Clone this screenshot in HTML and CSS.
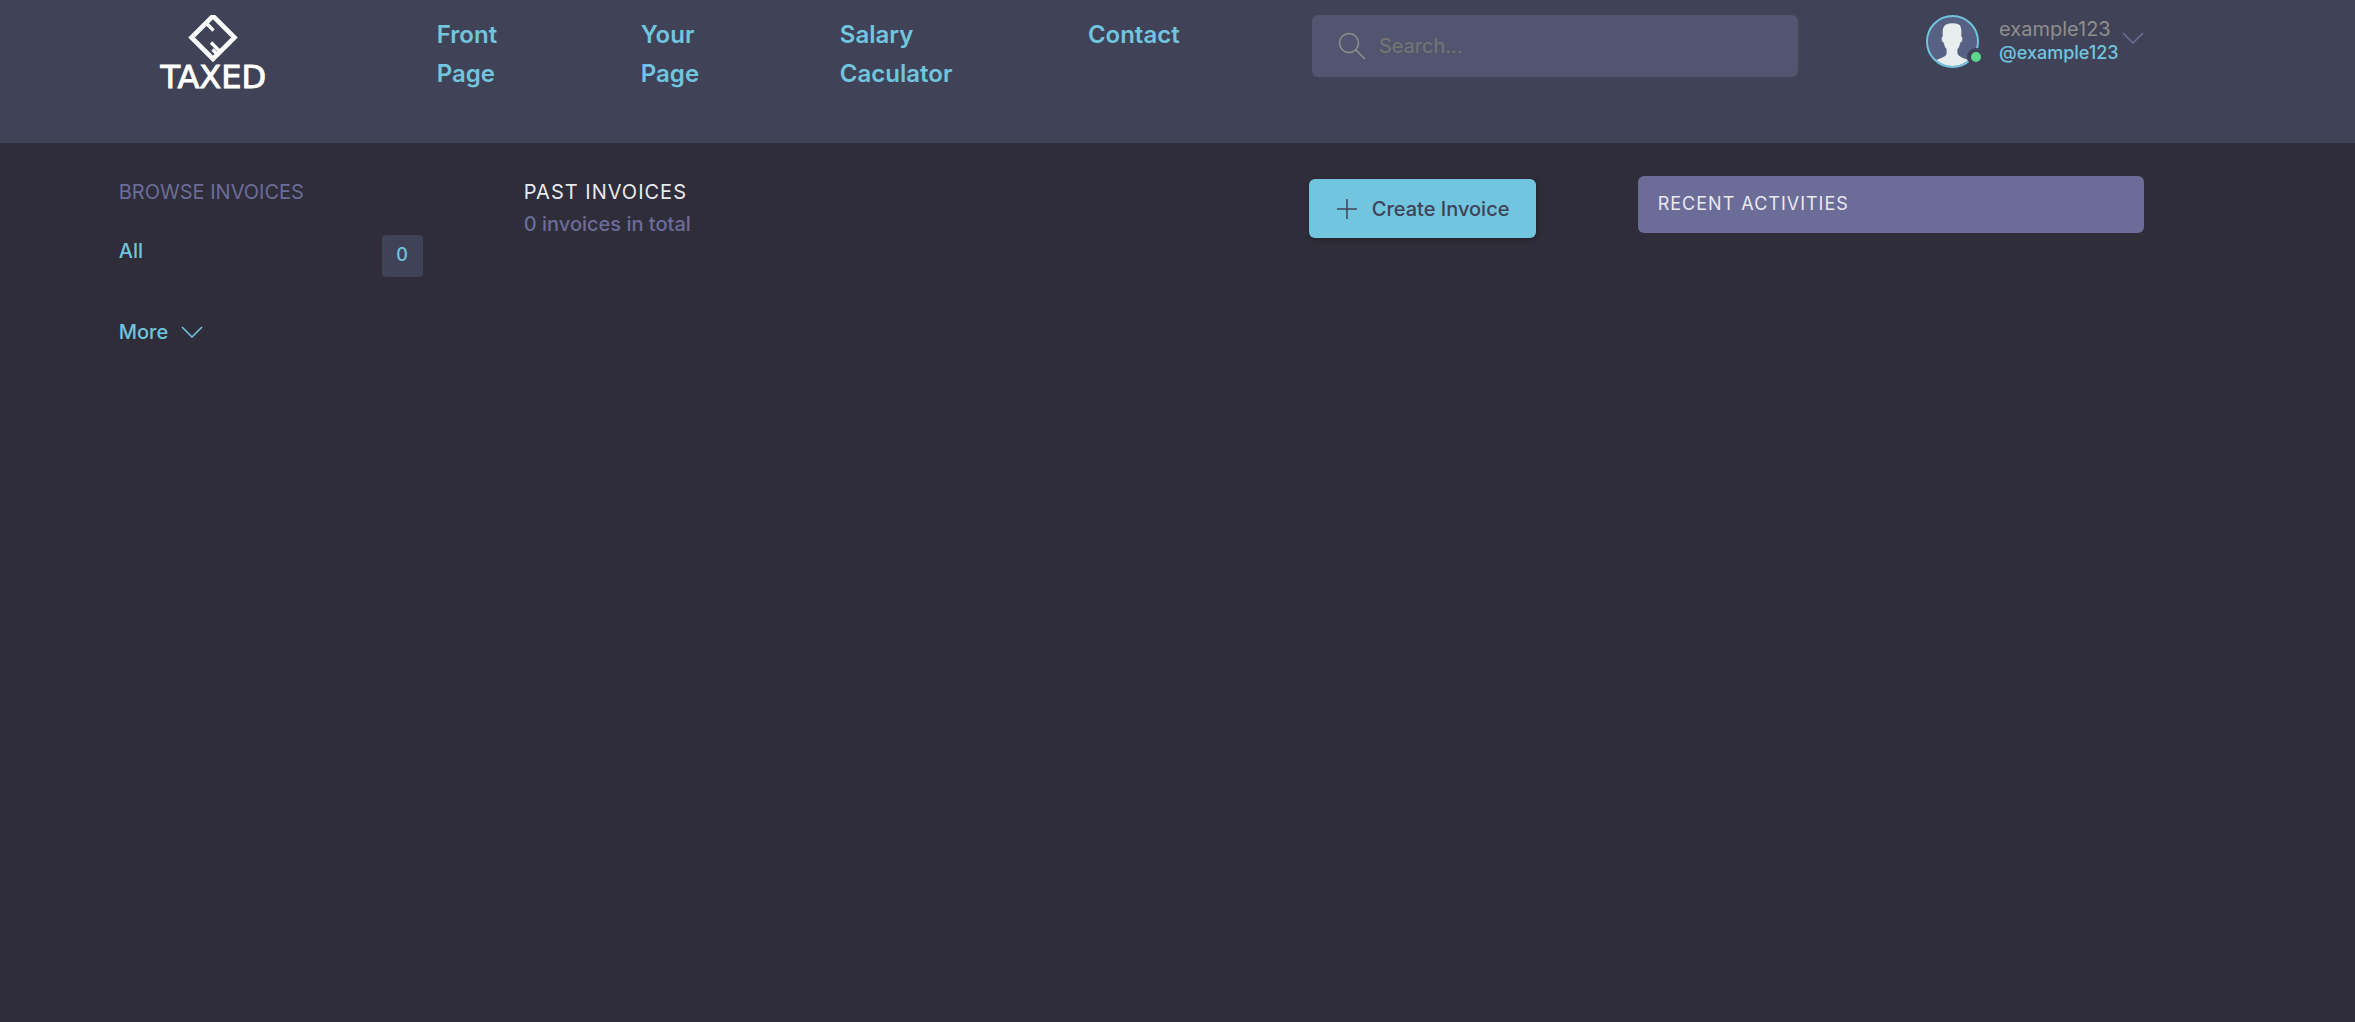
FILE: index.html
```html
<!DOCTYPE html>
<html lang="en">
<head>
<meta charset="utf-8">
<meta name="viewport" content="width=device-width, initial-scale=1">
<title>Taxed</title>
<link rel="stylesheet" href="styles.css">
</head>
<body>
<header class="header">
  <a class="logo" href="#">
    <svg class="logo-mark" viewBox="0 0 50 48" width="50" height="48" fill="none" stroke="#fff" stroke-width="4.6" aria-hidden="true">
      <path d="M25 1 46.500 22.500 25 44 3.500 22.500Z"/>
      <path stroke-width="3.4" d="M17 7 25.500 15.500M23 27.500 32 36.500M24.500 34.500 29 39"/>
    </svg>
    <span class="logo-text">TAXED</span>
  </a>
  <nav class="nav">
    <a href="#">Front Page</a>
    <a href="#">Your Page</a>
    <a href="#">Salary Caculator</a>
    <a href="#">Contact</a>
  </nav>
  <form class="search" role="search">
    <svg viewBox="0 0 28 28" width="28" height="28" fill="none" stroke="#8f8f8d" stroke-width="1.500" aria-hidden="true">
      <circle cx="11" cy="11" r="9.500"/><path d="M17.500 17.500 27 27"/>
    </svg>
    <input type="search" placeholder="Search..." aria-label="Search">
  </form>
  <div class="user">
    <div class="avatar">
      <svg viewBox="0 0 54 54" width="53" height="53" aria-hidden="true">
        <defs><clipPath id="face"><circle cx="27" cy="27" r="25"/></clipPath></defs>
        <circle cx="27" cy="27" r="26" fill="#576183"/>
        <path clip-path="url(#face)" fill="#e8eded" d="M20 10q7-3 14 0 2 2 2 7v5q1 0 1 2 0 4-2 4-1 5-3 7v4q1 3 6 5 7 2 9 5v6H6v-7q3-2 9-4 6-2 6-5v-4q-2-2-3-7-2 0-2-4 0-2 1-2v-5q0-5 3-7z"/>
        <circle cx="27" cy="27" r="26" fill="none" stroke="#71c5de" stroke-width="2"/>
      </svg>
      <span class="status"></span>
    </div>
    <div class="user-text">
      <span class="user-name">example123</span>
      <a class="user-handle" href="#">@example123</a>
    </div>
    <button class="user-toggle" type="button" aria-label="Account menu">
      <svg viewBox="0 0 22 12" width="22" height="12" fill="none" stroke="#6c6c99" stroke-width="1.500"><path d="M1 1 11 11 21 1"/></svg>
    </button>
  </div>
</header>
<main class="main">
  <aside class="browse">
    <h2 class="browse-title">BROWSE INVOICES</h2>
    <a class="filter" href="#"><span>All</span><span class="count">0</span></a>
    <button class="more" type="button">More
      <svg viewBox="0 0 22 12" width="22" height="12" fill="none" stroke="#71c5de" stroke-width="1.500" aria-hidden="true"><path d="M1 1 11 11 21 1"/></svg>
    </button>
  </aside>
  <section class="invoices">
    <div>
      <h1 class="heading">PAST INVOICES</h1>
      <p class="total">0 invoices in total</p>
    </div>
    <button class="create" type="button">
      <svg viewBox="0 0 22 22" width="22" height="22" stroke="#404257" stroke-width="1.500" aria-hidden="true"><path d="M11 1v20M1 11h20"/></svg>
      Create Invoice
    </button>
  </section>
  <aside class="activities">
    <h2 class="heading">RECENT ACTIVITIES</h2>
  </aside>
</main>
</body>
</html>
```
FILE: styles.css
```css
* { box-sizing: border-box; }

body {
  margin: 0;
  min-height: 100vh;
  background: #2e2d39;
  color: #71c5de;
  font: 500 20px/32px Inter, "Liberation Sans", sans-serif;
}

a { color: inherit; text-decoration: none; }
h1, h2, p { margin: 0; }
button { border: 0; padding: 0; background: none; color: inherit; font: inherit; cursor: pointer; }
svg { display: block; flex: none; }

.header {
  display: grid;
  grid-template-columns: 318fr 875fr 486fr 346fr;
  align-items: start;
  min-height: 143px;
  padding: 15px calc(9% - 1px) 0 calc(5% + 1px);
  background: #404257;
}

.logo {
  display: flex;
  flex-direction: column;
  align-items: center;
  width: 189px;
  color: #fff;
}
.logo-text {
  font: 400 32px/28px "DejaVu Sans", sans-serif;
  -webkit-text-stroke: 1px #fff;
}

.nav {
  display: grid;
  grid-template-columns: 204fr 199fr 248fr 224fr;
  font-size: 24px;
  font-weight: 600;
  line-height: 39px;
}
.nav a { width: min-content; }

.search {
  display: flex;
  align-items: center;
  gap: 13px;
  height: 62px;
  padding: 0 26px;
  border-radius: 6px;
  background: #52556f;
}
.search input {
  flex: 1;
  min-width: 0;
  padding: 0;
  border: 0;
  outline: 0;
  background: none;
  color: #fff;
  font: inherit;
  font-weight: 400;
}
.search input::placeholder { color: #757575; }

.user {
  display: flex;
  justify-content: flex-end;
}
.avatar { position: relative; }
.status {
  position: absolute;
  right: -6px;
  bottom: 2px;
  width: 18px;
  height: 18px;
  border: 4px solid #404257;
  border-radius: 50%;
  background: #5ed68d;
}
.user-text {
  display: flex;
  flex-direction: column;
  width: 123px;
  margin-left: 20px;
  padding-top: 2px;
  line-height: 24px;
}
.user-name { color: #8f8f8d; font-weight: 400; }
.user-handle { font-size: 18px; }
.user-toggle { align-self: start; padding-top: 17px; }

.main {
  display: grid;
  grid-template-columns: 15fr 50fr 25fr;
  column-gap: 5%;
  align-items: start;
  padding: 33px calc(9% - 1px) 32px calc(5% + 1px);
}

.browse-title {
  color: #6c6c99;
  font-size: 20px;
  font-weight: 400;
}
.filter {
  display: flex;
  justify-content: space-between;
  margin-top: 27px;
}
.count {
  width: 41px;
  height: 42px;
  border-radius: 4px;
  background: #404257;
  font-size: 18px;
  line-height: 40px;
  text-align: center;
}
.more {
  display: flex;
  align-items: center;
  gap: 13px;
  margin-top: 39px;
}

.invoices {
  display: flex;
  justify-content: space-between;
  align-items: start;
}
.heading {
  color: #e9e9ee;
  font-size: 20px;
  font-weight: 400;
  letter-spacing: 1px;
}
.total { color: #6c6c99; }
.create {
  display: flex;
  align-items: center;
  gap: 14px;
  height: 59px;
  margin-top: 3px;
  padding: 0 27px;
  border-radius: 6px;
  background: #71c5de;
  box-shadow: 1px 2px 6px rgba(0, 0, 0, 0.25);
  color: #404257;
}

.activities {
  padding: 12px 20px 13px;
  border-radius: 6px;
  background: #6c6c99;
}
.activities .heading { font-size: 18px; }
```
